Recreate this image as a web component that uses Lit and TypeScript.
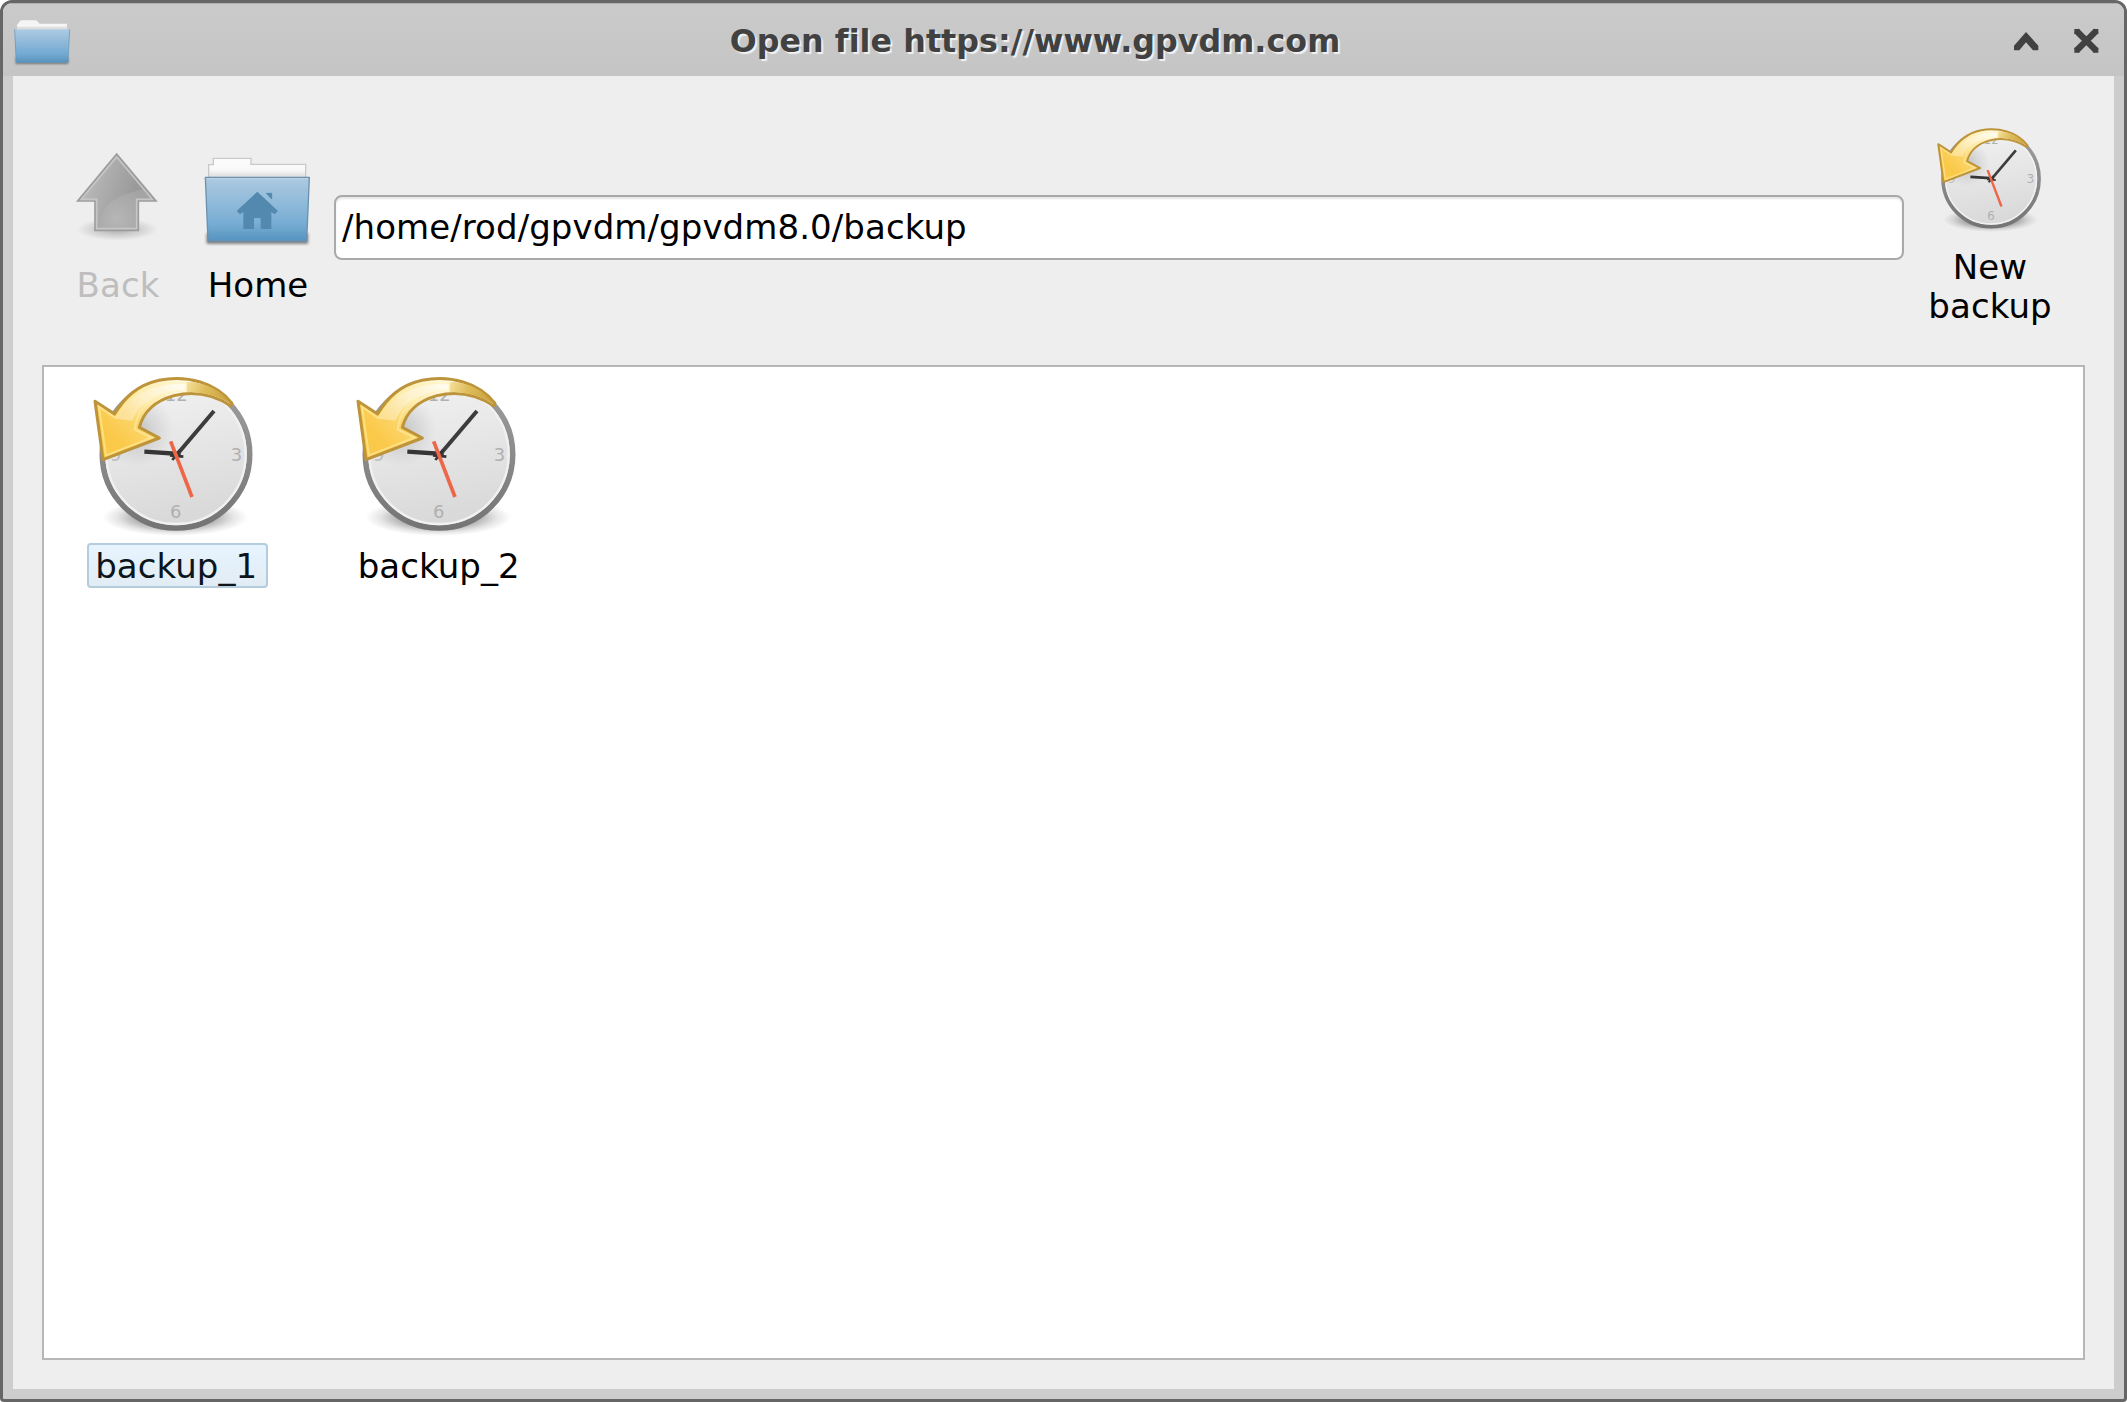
import { LitElement, html, css } from "lit";
import { customElement, property } from "lit/decorators.js";

@customElement("clock-icon")
class ClockIcon extends LitElement {
  static styles = css`
    :host { display: block; width: 170px; height: 168px; flex: none; }
    svg { display: block; width: 100%; height: 100%; }
    .digit { font-family: "DejaVu Sans", sans-serif; font-size: 54px; fill: #b0b0b0; }
    .faint { fill: #bcbcbc; }
  `;
  render() {
    return html`<svg viewBox="30 36 510 504">
      <defs>
        <radialGradient id="shade"><stop offset="0.5" stop-color="#000" stop-opacity=".34"/><stop offset="0.8" stop-color="#000" stop-opacity=".1"/><stop offset="1" stop-color="#000" stop-opacity="0"/></radialGradient>
        <linearGradient id="face" x1="0" y1="0" x2="0.2" y2="1"><stop offset="0" stop-color="#f4f4f4"/><stop offset="1" stop-color="#d9d9d9"/></linearGradient>
        <linearGradient id="rim" x1="0" y1="0" x2="0" y2="1"><stop offset="0" stop-color="#a0a0a0"/><stop offset="0.5" stop-color="#8b8b8b"/><stop offset="1" stop-color="#747474"/></linearGradient>
        <linearGradient id="tail" gradientUnits="userSpaceOnUse" x1="310" y1="80" x2="460" y2="130"><stop offset="0" stop-color="#f6e3a0"/><stop offset="0.4" stop-color="#dfbd5c"/><stop offset="1" stop-color="#c39a34"/></linearGradient>
        <linearGradient id="gold" gradientUnits="userSpaceOnUse" x1="300" y1="75" x2="120" y2="250"><stop offset="0" stop-color="#fffae6"/><stop offset="0.42" stop-color="#fdeaaa"/><stop offset="0.7" stop-color="#fbd468"/><stop offset="1" stop-color="#fbc94a"/></linearGradient>
        <radialGradient id="cast" gradientUnits="userSpaceOnUse" cx="170" cy="210" r="110"><stop offset="0" stop-color="#888" stop-opacity=".42"/><stop offset="1" stop-color="#999" stop-opacity="0"/></radialGradient>
      </defs>
      <ellipse cx="286" cy="472" rx="218" ry="56" fill="url(#shade)"/>
      <circle cx="288" cy="283" r="221" fill="url(#face)" stroke="url(#rim)" stroke-width="17"/>
      <circle cx="288" cy="283" r="209" fill="none" stroke="#f1f1f1" stroke-width="7"/>
      <circle cx="288" cy="283" r="206" fill="url(#cast)"/>
      <text class="digit" x="254" y="124">12</text>
      <text class="digit" x="452" y="303">3</text>
      <text class="digit" x="270" y="475">6</text>
      <text class="digit faint" x="90" y="302">9</text>
      <path d="M193 275L302 282" stroke="#353535" stroke-width="13"/>
      <path d="M282 294L402 153" stroke="#3c3c3e" stroke-width="12"/>
      <path d="M270 286L310 290M277 300L300 270" stroke="#353535" stroke-width="8"/>
      <path d="M272 244L336 411" stroke="#ee6648" stroke-width="11"/>
      <path d="M45 124L104 162C134 112 171 76 237 61C322 44 408 68 456 130L452 137C401 104 340 93 282 107C224 123 190 157 178 202L238 234L69 299Z" fill="url(#gold)" stroke="#bd943a" stroke-width="9" stroke-linejoin="round"/>
      <path d="M320 66C376 66 422 90 452 131C414 108 370 96 320 96Z" fill="url(#tail)"/>
      <path d="M57 140L106 174C138 121 174 87 239 73C275 65 318 68 320 70L317 91C222 92 172 138 164 208L214 233L78 286Z" fill="none" stroke="#fff0ac" stroke-opacity=".55" stroke-width="6"/>
      <path d="M108 176C145 110 194 77 302 72L317 76L316 92C222 95 173 137 158 182Z" fill="#fff" fill-opacity=".34"/>
    </svg>`;
  }
}

@customElement("folder-icon")
class FolderIcon extends LitElement {
  @property({ type: Boolean }) home = false;
  static styles = css`
    :host { display: block; flex: none; }
    svg { display: block; }
  `;
  render() {
    return this.home
      ? html`<svg width="114" height="96" viewBox="600 459 342 288">
          <defs>
            <linearGradient id="b" x1="0" y1="0" x2="0" y2="1"><stop offset="0" stop-color="#adcae1"/><stop offset="0.72" stop-color="#78add4"/><stop offset="1" stop-color="#5593be"/></linearGradient>
            <linearGradient id="w" x1="0" y1="0" x2="0" y2="1"><stop offset="0" stop-color="#fcfcfc"/><stop offset="0.6" stop-color="#f8f8f8"/><stop offset="1" stop-color="#d8d8d8"/></linearGradient>
            <filter id="s" x="-10%" y="-10%" width="120%" height="130%"><feGaussianBlur stdDeviation="4"/></filter>
          </defs>
          <path d="M620 700H924V731H620Z" fill="#000" fill-opacity=".5" filter="url(#s)"/>
          <path d="M626 534V494H640V475H753V493H917V534Z" fill="url(#w)" stroke="#c9c9c9" stroke-width="4"/>
          <path d="M616 532H928L920 723H624Z" fill="url(#b)" stroke="#6c91ae" stroke-width="4" stroke-linejoin="round"/>
          <path d="M620 536H924" stroke="#c0d6e7" stroke-width="3"/>
          <path d="M772 575L834 633L824 643L814 636V687H782V654H762V687H730V636L720 643L710 633Z" fill="#5489af"/>
          <path d="M799 580H815V597Z" fill="#5489af" stroke="#5489af" stroke-width="3"/>
        </svg>`
      : html`<svg width="65" height="53" viewBox="30 45 195 159">
          <defs>
            <linearGradient id="b" x1="0" y1="0" x2="0" y2="1"><stop offset="0" stop-color="#adcae1"/><stop offset="0.75" stop-color="#72a9d2"/><stop offset="1" stop-color="#5791bc"/></linearGradient>
            <filter id="s" x="-10%" y="-30%" width="120%" height="160%"><feGaussianBlur stdDeviation="3"/></filter>
          </defs>
          <path d="M47 172H205V192H47Z" fill="#000" fill-opacity=".4" filter="url(#s)"/>
          <path d="M51 90V75L62 61H109L119 71H201V90Z" fill="#f5f5f5"/>
          <path d="M51 80H202V88H51Z" fill="#dedede"/>
          <path d="M43 88H210L204 188H48Z" fill="url(#b)"/>
          <path d="M44 88L49 187H204L209 88" fill="none" stroke="#6b95b7" stroke-opacity=".7" stroke-width="3"/>
        </svg>`;
  }
}

@customElement("app-root")
class AppRoot extends LitElement {
  static styles = css`
    :host { display: block; width: 2127px; height: 1402px; background: #fff; font: 34px/39.6px "DejaVu Sans", sans-serif; letter-spacing: 0.08px; color: #000; }
    * { box-sizing: border-box; }
    svg { display: block; flex: none; }
    .window { width: 2127px; height: 1402px; border: 3px solid #666; border-radius: 12px 12px 4px 4px; background: #cdcdcd; display: flex; flex-direction: column; overflow: hidden; }
    .titlebar { height: 73px; flex: none; display: flex; align-items: flex-start; background: linear-gradient(#cacaca, #c5c5c5); border-top: 1px solid #b0b0b0; }
    .titlebar folder-icon { margin: 11px 0 0 7px; }
    .title { flex: 1; text-align: center; margin-top: 19px; font-size: 31.7px; line-height: 37px; font-weight: 700; color: #414141; text-shadow: 2px 2px 1px #f2f2f2; white-space: pre; }
    .body { flex: 1; margin: 0 10px 10px; padding: 0 29px 29px; background: #eee; display: flex; flex-direction: column; min-height: 0; }
    .toolbar { height: 289px; flex: none; display: flex; align-items: flex-start; }
    .tool { display: flex; flex-direction: column; align-items: center; text-align: center; flex: none; }
    .back { width: 112px; margin-left: 20px; padding-top: 72px; color: #bebebe; gap: 22px; }
    .home { width: 134px; margin-left: 16px; padding-top: 77px; gap: 17px; }
    .home span { padding-left: 2px; }
    .new { width: 152px; margin: 0 19px 0 10px; padding-top: 48.6px; gap: 13.7px; }
    .new clock-icon { width: 110.8px; height: 109.5px; }
    .path { flex: 1; height: 65px; margin: 119px 0 0 10px; padding: 11.4px 0 0 6px; background: #fff; border: 2px solid #a9a9a9; border-radius: 8px; box-shadow: inset 0 2px 2px #e6e6e6; white-space: nowrap; }
    .list { flex: 1; border: 2px solid #b7b7b7; background: #fff; padding: 5px 0 0 1.75px; display: flex; align-items: flex-start; }
    .item { width: 262.5px; display: flex; flex-direction: column; align-items: center; gap: 3px; }
    .item clock-icon { margin-left: -4px; }
    .label { width: 181px; height: 45px; border: 2px solid transparent; border-radius: 4px; padding: 2px 1.5px 0 0; text-align: center; }
    .selected { background: linear-gradient(#e7f4fe, #e2ecf4); border-color: #b3cddd; color: #0b151b; }
  `;
  private items = [
    { name: "backup_1", selected: true },
    { name: "backup_2", selected: false },
  ];
  render() {
    return html`<div class="window">
      <div class="titlebar">
        <folder-icon></folder-icon>
        <div class="title">Open file https://www.gpvdm.com</div>
        <svg width="129" height="72" viewBox="105 12 387 216" fill="none" stroke="#414141">
          <path d="M162 151V137L198 96L235 137V151H219L198 127L178 151Z" fill="#414141" stroke="none"/>
          <path d="M349 92L409 152M409 92L349 152" stroke-width="19"/>
          <path d="M343 87H358V102H343ZM400 87H415V102H400ZM343 143H358V158H343ZM400 143H415V158H400Z" fill="#414141" stroke="none"/>
        </svg>
      </div>
      <div class="body">
        <div class="toolbar">
          <div class="tool back">
            <svg width="90" height="96" viewBox="219 444 270 288">
              <defs>
                <radialGradient id="sh"><stop offset="0.2" stop-color="#000" stop-opacity=".22"/><stop offset="1" stop-color="#000" stop-opacity="0"/></radialGradient>
                <linearGradient id="ar" x1="0" y1="0" x2="1" y2="0.3"><stop offset="0.2" stop-color="#b9b9b9"/><stop offset="0.8" stop-color="#9a9a9a"/></linearGradient>
                <radialGradient id="lo" gradientUnits="userSpaceOnUse" cx="350" cy="655" r="95"><stop offset="0" stop-color="#b6b6b6"/><stop offset="1" stop-color="#a4a4a4"/></radialGradient>
              </defs>
              <ellipse cx="352" cy="688" rx="122" ry="34" fill="url(#sh)"/>
              <path d="M350 462L468 603H415V691H285V603H233Z" fill="url(#ar)" stroke="#9c9c9c" stroke-width="5"/>
              <path d="M299 683C299 610 355 584 430 568L455 597H409V685Z" fill="url(#lo)"/>
              <path d="M350 471L457 598H410V686H290V598H244Z" fill="none" stroke="#c6c6c6" stroke-width="5"/>
            </svg>
            <span>Back</span>
          </div>
          <div class="tool home"><folder-icon home></folder-icon><span>Home</span></div>
          <div class="path">/home/rod/gpvdm/gpvdm8.0/backup</div>
          <div class="tool new"><clock-icon></clock-icon><span>New<br>backup</span></div>
        </div>
        <div class="list">
          ${this.items.map(i => html`<div class="item">
            <clock-icon></clock-icon>
            <div class="label ${i.selected ? "selected" : ""}">${i.name}</div>
          </div>`)}
        </div>
      </div>
    </div>`;
  }
}
